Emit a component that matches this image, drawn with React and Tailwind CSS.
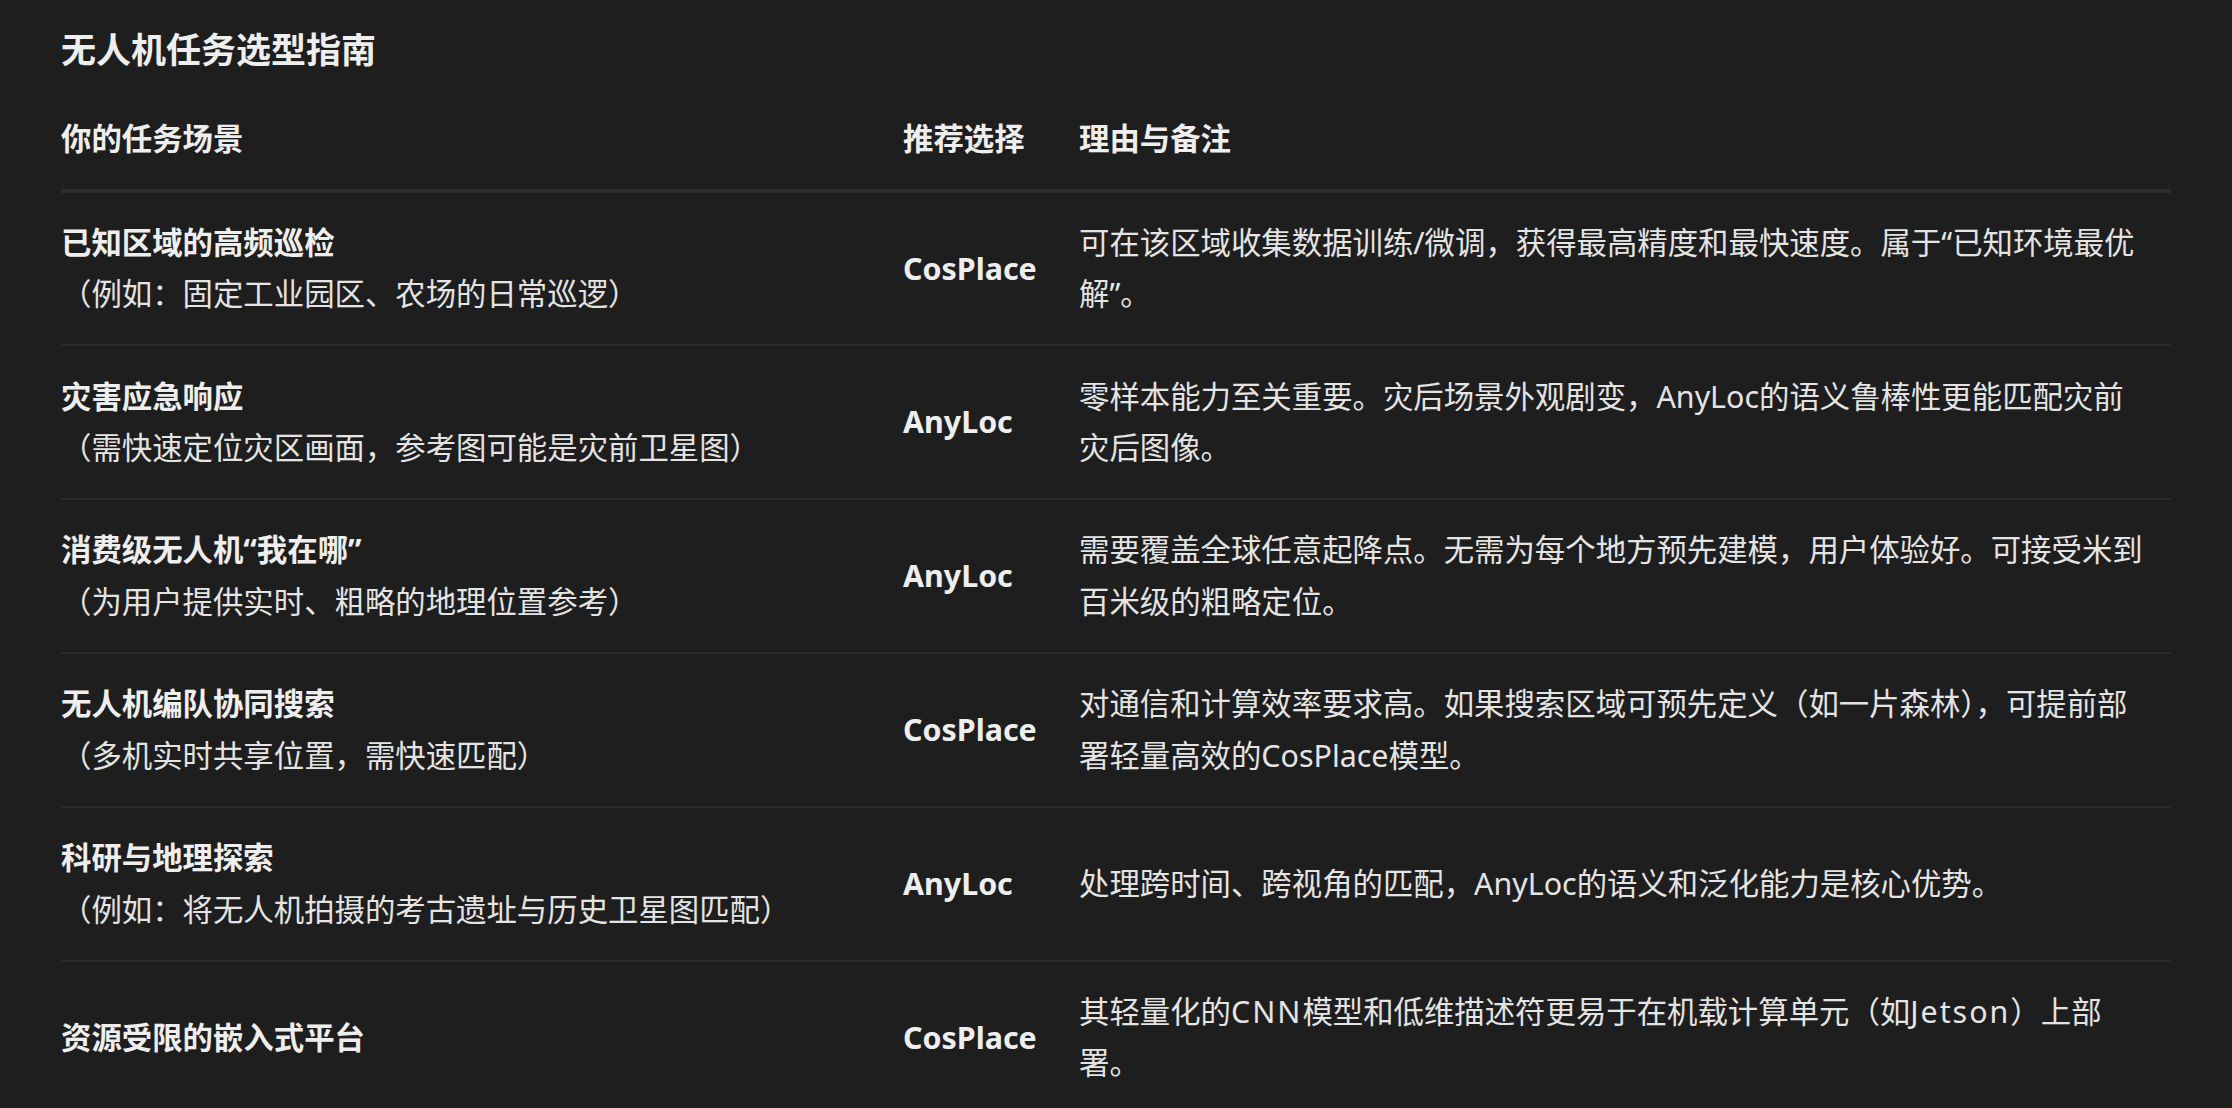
import React from "react";

// latin words in the last row are set a bit wider, like the original font
const Latin = ({ children }) => <span className="tracking-[2px]">{children}</span>;

const rows = [
    {
        scene: "已知区域的高频巡检",
        note: "（例如：固定工业园区、农场的日常巡逻）",
        pick: "CosPlace",
        reason: "可在该区域收集数据训练/微调，获得最高精度和最快速度。属于“已知环境最优解”。",
    },
    {
        scene: "灾害应急响应",
        note: "（需快速定位灾区画面，参考图可能是灾前卫星图）",
        pick: "AnyLoc",
        reason: "零样本能力至关重要。灾后场景外观剧变，AnyLoc的语义鲁棒性更能匹配灾前灾后图像。",
    },
    {
        scene: "消费级无人机“我在哪”",
        note: "（为用户提供实时、粗略的地理位置参考）",
        pick: "AnyLoc",
        reason: "需要覆盖全球任意起降点。无需为每个地方预先建模，用户体验好。可接受米到百米级的粗略定位。",
    },
    {
        scene: "无人机编队协同搜索",
        note: "（多机实时共享位置，需快速匹配）",
        pick: "CosPlace",
        reason: "对通信和计算效率要求高。如果搜索区域可预先定义（如一片森林），可提前部署轻量高效的CosPlace模型。",
    },
    {
        scene: "科研与地理探索",
        note: "（例如：将无人机拍摄的考古遗址与历史卫星图匹配）",
        pick: "AnyLoc",
        reason: "处理跨时间、跨视角的匹配，AnyLoc的语义和泛化能力是核心优势。",
    },
    {
        scene: "资源受限的嵌入式平台",
        note: null,
        pick: "CosPlace",
        reason: (
            <>
                其轻量化的<Latin>CNN</Latin>模型和低维描述符更易于在机载计算单元（如<Latin>Jetson</Latin>）上部署。
            </>
        ),
    },
];

export default function App() {
    return (
        <div
            className="min-h-screen bg-[#1e1e1e] text-[#e4e4e4] px-[61px] pt-[24px]"
            style={{ fontFamily: '"Noto Sans", "Noto Sans CJK SC", sans-serif' }}
        >
            <h2 className="text-[35px] leading-[52px] font-bold text-[#eeeeee] mb-[12px]">无人机任务选型指南</h2>

            {/* header */}
            <div className="grid grid-cols-[842px_176px_1fr] border-b-4 border-[#2d2d2d] pt-[25px] pb-[24px] text-[30.4px] leading-[51.6px] font-bold text-[#eeeeee]">
                <div>你的任务场景</div>
                <div>推荐选择</div>
                <div>理由与备注</div>
            </div>

            {rows.map((row, i) => (
                <div
                    key={i}
                    className="grid grid-cols-[842px_176px_1fr] items-center border-b-2 border-[#2a2a2a] py-[24.3px] text-[30.4px] leading-[51.6px]"
                >
                    <div>
                        <div className="font-bold text-[#eeeeee]">{row.scene}</div>
                        {row.note && <div>{row.note}</div>}
                    </div>
                    <div className="font-bold text-[#eeeeee]">{row.pick}</div>
                    <div className="pr-[24px]">{row.reason}</div>
                </div>
            ))}
        </div>
    );
}
